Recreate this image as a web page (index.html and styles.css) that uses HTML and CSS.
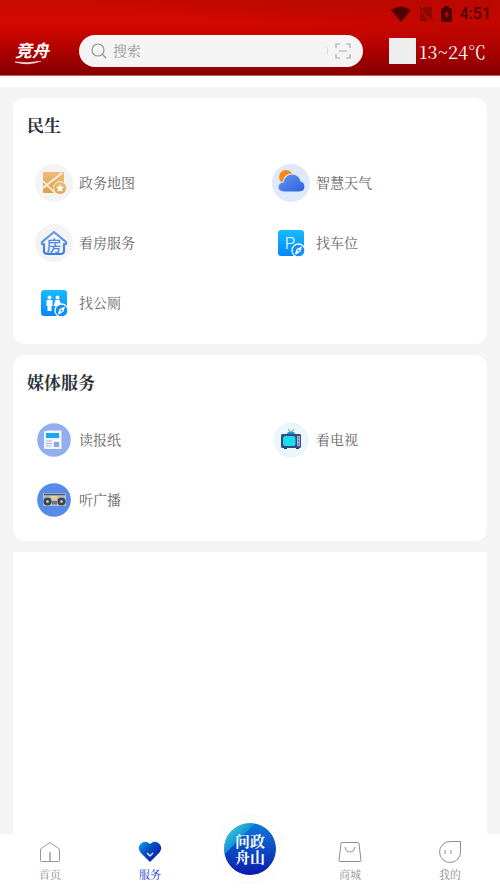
FILE: index.html
```html
<!DOCTYPE html>
<html lang="zh-CN">
<head>
<meta charset="utf-8">
<meta name="viewport" content="width=device-width, initial-scale=1">
<title>服务</title>
<link rel="stylesheet" href="styles.css">
</head>
<body>
<header class="header">
  <div class="status">
    <svg width="20" height="16" viewBox="0 0 20 16" aria-hidden="true"><path d="M0 4Q10-3 20 4L10 16Z" fill="#510000"/></svg>
    <svg width="14" height="16" viewBox="0 0 14 16" aria-hidden="true"><path d="M5 1h8v12L3 3ZM1 5l9 10H1Z" fill="#8c0800"/><path d="M0 1l14 14" stroke="#8c0800" stroke-width="1.5"/></svg>
    <svg width="11" height="16" viewBox="0 0 11 16" aria-hidden="true"><path d="M3 2V0h5v2h2q1 0 1 1v12q0 1-1 1H1q-1 0-1-1V3q0-1 1-1Z" fill="#510000"/><path d="M6.500 4L3 9h2v4l3.500-5h-2Z" fill="#b80800"/></svg>
    <span class="clock">4:51</span>
  </div>
  <div class="toolbar">
    <a class="brand" href="#">
      <span>竞舟</span>
      <svg width="26" height="4" viewBox="0 0 26 4" aria-hidden="true"><path d="M0 1Q13 5 26 0Q14 3 0 1Z" fill="#fff" stroke="#fff" stroke-width=".6"/></svg>
    </a>
    <form class="search">
      <svg width="16" height="16" viewBox="0 0 16 16" fill="none" stroke="#929498" stroke-width="1.2" aria-hidden="true"><circle cx="7" cy="7" r="6"/><path d="M11.500 11.500L15 15"/></svg>
      <input class="search-input" type="search" placeholder="搜索" aria-label="搜索">
      <button class="scan" type="button" aria-label="扫一扫"><svg width="16" height="16" viewBox="0 0 16 16" fill="none" stroke="#aaa" stroke-width="1.2"><path d="M1 5V1h4M11 1h4v4M15 11v4h-4M5 15H1v-4M4 8h8"/></svg></button>
    </form>
    <div class="weather"><span class="weather-icon"></span><span>13~24℃</span></div>
  </div>
</header>

<main class="main">
  <section class="card">
    <h2 class="title">民生</h2>
    <div class="grid">
      <a class="item" href="#">
        <svg class="icon" viewBox="0 0 38 38" aria-hidden="true">
          <defs><linearGradient id="gold" x2="0" y2="1"><stop stop-color="#f0bd76"/><stop offset="1" stop-color="#dda04e"/></linearGradient></defs>
          <circle cx="19" cy="19" r="18.500" fill="#f4f4f4" stroke="#ececec" stroke-width=".6"/>
          <rect x="8" y="8" width="21" height="21" rx="1" fill="url(#gold)"/>
          <path d="M8 24L27 9M8 17l12 12" stroke="#f7f3eb" stroke-width="1.600" fill="none"/>
          <circle cx="25" cy="24" r="6.500" fill="url(#gold)" stroke="#f7f3eb"/>
          <path d="M25 20l1.200 2.600 2.800.4-2 2 .5 2.800-2.500-1.300-2.500 1.300.5-2.800-2-2 2.800-.4Z" fill="#fff"/>
        </svg>
        <span>政务地图</span>
      </a>
      <a class="item" href="#">
        <svg class="icon" viewBox="0 0 38 38" aria-hidden="true">
          <defs><linearGradient id="cloud" x2="1" y2="1"><stop stop-color="#699bf5"/><stop offset="1" stop-color="#2b5ed9"/></linearGradient></defs>
          <circle cx="19" cy="19" r="19" fill="#dee9fc"/>
          <circle cx="14" cy="13" r="7" fill="#fa8b12"/>
          <path d="M12 28q-6 0-6-5 0-4 5-5 2-8 9-8 7 0 9 7 4 1 4 6 0 5-6 5Z" fill="url(#cloud)" stroke="#dee9fc" stroke-width="1.200"/>
        </svg>
        <span>智慧天气</span>
      </a>
      <a class="item" href="#">
        <svg class="icon" viewBox="0 0 38 38" aria-hidden="true">
          <defs><linearGradient id="house" x2="0" y2="1"><stop stop-color="#6d9ee9"/><stop offset="1" stop-color="#3c7be0"/></linearGradient></defs>
          <circle cx="19" cy="19" r="18.500" fill="#f4f4f4" stroke="#ececec" stroke-width=".6"/>
          <path d="M7 18L19 8l12 10v2h-2v7q0 3-4 3H13q-4 0-4-3v-7H7Z" fill="none" stroke="url(#house)" stroke-width="2.200" stroke-linejoin="round"/>
          <text class="glyph-house" x="19" y="27" text-anchor="middle">房</text>
        </svg>
        <span>看房服务</span>
      </a>
      <a class="item" href="#">
        <svg class="icon" viewBox="0 0 38 38" aria-hidden="true">
          <defs><linearGradient id="sky" x2="0" y2="1"><stop stop-color="#16bcff"/><stop offset="1" stop-color="#0786fb"/></linearGradient></defs>
          <rect x="6" y="6" width="26" height="26" rx="3" fill="url(#sky)"/>
          <text class="glyph-park" x="18" y="25" text-anchor="middle">P</text>
          <circle cx="26.500" cy="26.500" r="6.500" fill="#108ffc" stroke="#fff" stroke-width="1.300"/>
          <path d="M30 22.500l-1.500 5-4.500 3-1-.8 1.500-4.700Z" fill="#fff"/><circle cx="26.500" cy="26.500" r="1" fill="#108ffc"/>
        </svg>
        <span>找车位</span>
      </a>
      <a class="item" href="#">
        <svg class="icon" viewBox="0 0 38 38" aria-hidden="true">
          <rect x="6" y="6" width="26" height="26" rx="3" fill="url(#sky)"/>
          <g fill="#fff"><circle cx="14.500" cy="13.500" r="2"/><path d="M11.500 16h6v6h-1v5h-4v-5h-1Z"/><circle cx="22.500" cy="13.500" r="2"/><path d="M20.500 16h4l2 6h-2v5h-4v-5h-2Z"/></g>
          <circle cx="26.500" cy="26.500" r="6.500" fill="#108ffc" stroke="#fff" stroke-width="1.300"/>
          <path d="M30 22.500l-1.500 5-4.500 3-1-.8 1.500-4.700Z" fill="#fff"/><circle cx="26.500" cy="26.500" r="1" fill="#108ffc"/>
        </svg>
        <span>找公厕</span>
      </a>
    </div>
  </section>

  <section class="card">
    <h2 class="title">媒体服务</h2>
    <div class="grid">
      <a class="item" href="#">
        <svg class="icon" viewBox="0 0 38 38" aria-hidden="true">
          <circle cx="19" cy="19" r="16.800" fill="#91aef0"/>
          <path d="M12 9h15v19H12Z" fill="#d5cde5"/><rect x="9" y="10" width="17" height="18" rx="1" fill="#f1f5fd"/>
          <rect x="11" y="12" width="13" height="5" fill="#12a9f0"/>
          <path d="M11 20h6M11 22.500h6M11 25h5" stroke="#a8b3d2"/><rect x="19" y="21" width="5" height="5" fill="#87a6f0"/>
        </svg>
        <span>读报纸</span>
      </a>
      <a class="item" href="#">
        <svg class="icon" viewBox="0 0 38 38" aria-hidden="true">
          <circle cx="19" cy="19" r="16.800" fill="#eaf8fe" stroke="#d8edf5" stroke-width=".6"/>
          <path d="M16 8l3 4 3-4" fill="none" stroke="#68788e" stroke-width=".8"/><path d="M15 13q0-2.500 4-2.500t4 2.500Z" fill="#2793cf"/>
          <path d="M12 26h3v2h-3ZM24 26h3v2h-3Z" fill="#333c67"/><rect x="9" y="13" width="20" height="14" rx="1.500" fill="#40477b"/>
          <rect x="11" y="15" width="12.500" height="10" rx="2.500" fill="#15e0ee"/><rect x="25" y="15" width="3" height="10" fill="#9cb6e2"/><path d="M26 17h1M26 20h1M26 23h1" stroke="#40477b"/>
        </svg>
        <span>看电视</span>
      </a>
      <a class="item" href="#">
        <svg class="icon" viewBox="0 0 38 38" aria-hidden="true">
          <circle cx="19" cy="19" r="16.800" fill="#578ae9"/>
          <rect x="8" y="12" width="23" height="13" rx="1" fill="#b3c2ce"/>
          <path d="M9 13.500h21" stroke="#465568" stroke-width="1.500"/><rect x="16.500" y="15" width="5.500" height="3.500" fill="#f3cd77"/><rect x="17" y="20" width="5" height="3.500" fill="#667887"/>
          <g fill="#f5e094" stroke="#3c4653" stroke-width="2.800"><circle cx="12.500" cy="20.500" r="2.700"/><circle cx="26.500" cy="20.500" r="2.700"/></g>
        </svg>
        <span>听广播</span>
      </a>
    </div>
  </section>
  <section class="panel"></section>
</main>

<nav class="tabs">
  <a class="tab" href="#">
    <svg width="24" height="24" viewBox="0 0 24 24" fill="none" stroke="#96989c" aria-hidden="true"><path d="M2.500 9L12 2.500 21.500 9v11.500q0 1-1 1h-17q-1 0-1-1Z"/><path d="M12 12v9" stroke-width="1.400"/></svg>
    <span>首页</span>
  </a>
  <a class="tab tab-active" href="#">
    <svg width="24" height="24" viewBox="0 0 24 24" aria-hidden="true"><defs><linearGradient id="heart" x2=".8" y2=".7"><stop stop-color="#0caaea"/><stop offset=".5" stop-color="#0752c6"/><stop offset="1" stop-color="#0924b6"/></linearGradient></defs><path d="M12 22L2.500 12.500Q-1 8 2.500 4 7-.5 12 4q5-4.500 9.500 0 3.500 4 0 8.500Z" fill="url(#heart)"/><path d="M9 13l3 3 3-3" fill="none" stroke="#fff" stroke-width="1.200"/></svg>
    <span>服务</span>
  </a>
  <a class="tab tab-center" href="#"><span class="orb"><span class="orb-text">问政舟山</span></span></a>
  <a class="tab" href="#">
    <svg width="24" height="24" viewBox="0 0 24 24" fill="none" stroke="#8e8e8e" aria-hidden="true"><path d="M4 2.500h16q1 0 1 1l2 17q0 1-1 1H2q-1 0-1-1l2-17q0-1 1-1Z"/><path d="M7 7q1 5 5 5t5-5"/></svg>
    <span>商城</span>
  </a>
  <a class="tab" href="#">
    <svg width="24" height="24" viewBox="0 0 24 24" fill="none" stroke="#8e8e8e" aria-hidden="true"><path d="M22.500 1.500V11A10.500 10.500 0 1 1 12 1.500Z"/><path d="M7 10v4M13 10v4"/></svg>
    <span>我的</span>
  </a>
</nav>
</body>
</html>
```
FILE: styles.css
```css
* { box-sizing: border-box; }

body {
  margin: 0;
  min-height: 100vh;
  display: flex;
  flex-direction: column;
  background: #f4f4f4;
  color: #666;
  font-family: "Noto Serif CJK SC", "Liberation Serif", "Noto Sans CJK SC", serif;
}

a { color: inherit; text-decoration: none; }
svg { display: block; flex: none; }

.header {
  background:
    linear-gradient(8deg, transparent 58%, rgba(130, 0, 0, .2) 78%),
    linear-gradient(#c80a00, #d50800 30%, #c40500 48%, #a30000 75%, #860000);
  border-bottom: 1px solid #c45c5c;
}

.status {
  height: 27px;
  padding: 0 9px 0 0;
  display: flex;
  justify-content: flex-end;
  align-items: center;
  gap: 8px;
}

.clock {
  color: #510000;
  font: 500 16px/20px Roboto, sans-serif;
}

.toolbar {
  display: flex;
  align-items: center;
  height: 48px;
  padding: 0 14px;
}

.brand {
  width: 65px;
  flex: none;
  display: flex;
  flex-direction: column;
  gap: 1px;
  padding: 2px 0 0 1px;
  color: #fff;
  font: italic 700 17px/20px "Noto Sans CJK SC", sans-serif;
}

.search {
  flex: 1;
  min-width: 0;
  height: 32px;
  padding: 0 12px;
  border-radius: 16px;
  background: #f4f4f4;
  display: flex;
  align-items: center;
  gap: 6px;
}

.search-input {
  flex: 1;
  min-width: 0;
  padding: 0 0 2px;
  border: 0;
  outline: 0;
  background: none;
  color: #666;
  font: 14px/20px "Noto Serif CJK SC", "Liberation Serif", "Noto Sans CJK SC", serif;
}
.search-input::placeholder { color: #999ba0; opacity: 1; }

.scan {
  padding: 0 0 0 8px;
  border: 0;
  background: linear-gradient(#ddd, #ddd) left center / 1px 8px no-repeat;
}

.weather {
  flex: none;
  margin-left: 26px;
  display: flex;
  align-items: center;
  gap: 3px;
  color: #fff;
  font-size: 18px;
  line-height: 26px;
}
.weather-icon { width: 27px; height: 26px; background: #eee; }

.main {
  flex: 1;
  display: flex;
  flex-direction: column;
  gap: 11px;
  padding: 11px 13px 0;
  border-top: 11px solid #fff;
}

.card {
  padding: 15px 0 11px;
  border-radius: 12px;
  background: #fff;
}

.title {
  margin: 0 0 16px;
  padding: 0 14px;
  color: #293039;
  font-size: 17px;
  line-height: 24px;
  font-weight: 700;
}

.grid { display: grid; grid-template-columns: 1fr 1fr; }

.item {
  height: 60px;
  padding-left: 22px;
  display: flex;
  align-items: center;
  gap: 6px;
  font-size: 14px;
  line-height: 20px;
}
.item span { padding-bottom: 2px; }
.icon { width: 38px; height: 38px; }

.glyph-house { fill: #4c87e4; font: 500 15px "Noto Sans CJK SC", sans-serif; }
.glyph-park { fill: #fff; font: 300 17px Roboto, sans-serif; }

.panel { flex: 1; background: #fff; }

.tabs {
  position: sticky;
  bottom: 0;
  height: 54px;
  display: grid;
  grid-template-columns: repeat(5, 1fr);
  background: #fff;
}

.tab {
  display: flex;
  flex-direction: column;
  align-items: center;
  padding-top: 6px;
  gap: 2px;
  color: #8e8e8e;
  font-size: 11px;
  line-height: 16px;
}
.tab-active { color: #0a34c4; }

.tab-center { position: relative; }

.orb {
  position: absolute;
  bottom: 6px;
  width: 66px;
  height: 66px;
  border: 7px solid #fff;
  border-radius: 50%;
  display: flex;
  align-items: center;
  justify-content: center;
  background: linear-gradient(135deg, #28b6d5 18%, #1492dc 30%, transparent 31%), linear-gradient(#0c7add, #0b1dac) #0b1dac;
  background-clip: padding-box;
  box-shadow: 0 0 3px #eee;
  color: #fff;
  font-size: 15px;
  line-height: 16px;
  font-weight: 700;
}
.orb-text { width: 2em; }
```
